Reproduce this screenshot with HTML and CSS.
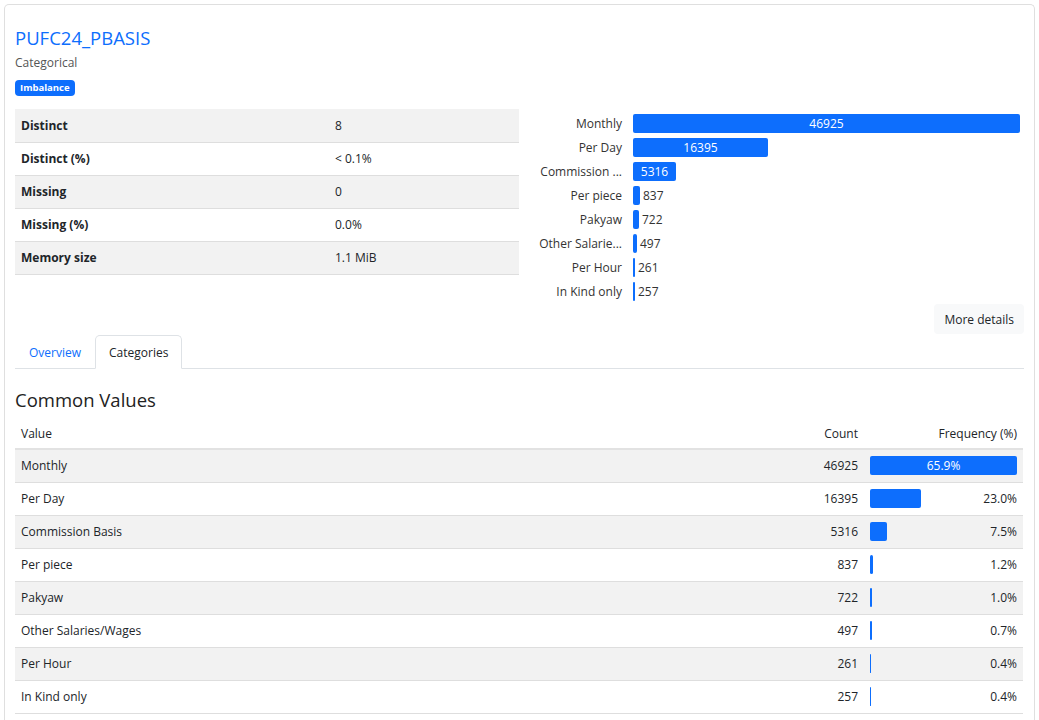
FILE: index.html
```html
<!DOCTYPE html>
<html>
<head>
<meta charset="utf-8">
<link rel="stylesheet" href="styles.css">
</head>
<body>
<div class="card">
  <h2 class="title">PUFC24_PBASIS</h2>
  <div class="subtitle">Categorical</div>
  <span class="badge">Imbalance</span>
  <div class="top">
    <table class="stats">
      <tr><th>Distinct</th><td>8</td></tr>
      <tr><th>Distinct (%)</th><td>&lt; 0.1%</td></tr>
      <tr><th>Missing</th><td>0</td></tr>
      <tr><th>Missing (%)</th><td>0.0%</td></tr>
      <tr><th>Memory size</th><td>1.1 MiB</td></tr>
    </table>
    <div class="chart">
      <div class="crow"><span class="clabel">Monthly</span><div class="ctrack"><div class="cbar in" style="width:387px">46925</div></div></div>
      <div class="crow"><span class="clabel">Per Day</span><div class="ctrack"><div class="cbar in" style="width:135px">16395</div></div></div>
      <div class="crow"><span class="clabel">Commission ...</span><div class="ctrack"><div class="cbar in" style="width:43px">5316</div></div></div>
      <div class="crow"><span class="clabel">Per piece</span><div class="ctrack"><div class="cbar" style="width:7px"></div><span class="cval">837</span></div></div>
      <div class="crow"><span class="clabel">Pakyaw</span><div class="ctrack"><div class="cbar" style="width:6px"></div><span class="cval">722</span></div></div>
      <div class="crow"><span class="clabel">Other Salarie...</span><div class="ctrack"><div class="cbar" style="width:4px"></div><span class="cval">497</span></div></div>
      <div class="crow"><span class="clabel">Per Hour</span><div class="ctrack"><div class="cbar thin" style="width:2px"></div><span class="cval">261</span></div></div>
      <div class="crow"><span class="clabel">In Kind only</span><div class="ctrack"><div class="cbar thin" style="width:2px"></div><span class="cval">257</span></div></div>
    </div>
  </div>
  <div class="actions"><button class="btn">More details</button></div>
  <div class="tabs">
    <span class="tab">Overview</span>
    <span class="tab active">Categories</span>
  </div>
  <h3 class="section">Common Values</h3>
  <table class="freq">
    <thead>
      <tr><th class="v">Value</th><th class="c">Count</th><th class="f">Frequency (%)</th></tr>
    </thead>
    <tbody>
      <tr><td class="v">Monthly</td><td class="c">46925</td><td class="f"><div class="fcell"><div class="fbar in" style="width:147px">65.9%</div></div></td></tr>
      <tr><td class="v">Per Day</td><td class="c">16395</td><td class="f"><div class="fcell"><div class="fbar" style="width:51px"></div><span class="fval">23.0%</span></div></td></tr>
      <tr><td class="v">Commission Basis</td><td class="c">5316</td><td class="f"><div class="fcell"><div class="fbar" style="width:17px"></div><span class="fval">7.5%</span></div></td></tr>
      <tr><td class="v">Per piece</td><td class="c">837</td><td class="f"><div class="fcell"><div class="fbar" style="width:3px"></div><span class="fval">1.2%</span></div></td></tr>
      <tr><td class="v">Pakyaw</td><td class="c">722</td><td class="f"><div class="fcell"><div class="fbar" style="width:2px"></div><span class="fval">1.0%</span></div></td></tr>
      <tr><td class="v">Other Salaries/Wages</td><td class="c">497</td><td class="f"><div class="fcell"><div class="fbar" style="width:2px"></div><span class="fval">0.7%</span></div></td></tr>
      <tr><td class="v">Per Hour</td><td class="c">261</td><td class="f"><div class="fcell"><div class="fbar" style="width:1px"></div><span class="fval">0.4%</span></div></td></tr>
      <tr><td class="v">In Kind only</td><td class="c">257</td><td class="f"><div class="fcell"><div class="fbar" style="width:1px"></div><span class="fval">0.4%</span></div></td></tr>
    </tbody>
  </table>
</div>
</body>
</html>
```
FILE: styles.css
```css
* { box-sizing: border-box; }
html, body { margin: 0; padding: 0; background: #fff; }
body {
  font-family: "Open Sans", "Noto Sans", sans-serif;
  font-size: 12px;
  color: #212529;
  padding: 4px 4px 0 4px;
}
.card {
  border: 1px solid #dfdfdf;
  border-bottom: none;
  border-radius: 5px 5px 0 0;
  padding: 20px 10px 0 10px;
  min-height: 716px;
}
.title {
  margin: 0;
  font-size: 18.5px;
  font-weight: 400;
  color: #0d6efd;
  line-height: 26px;
}
.subtitle {
  color: #555;
  font-size: 12px;
  line-height: 18px;
  margin-top: 3px;
}
.badge {
  display: inline-block;
  background: #0d6efd;
  color: #fff;
  font-weight: 700;
  font-size: 9.5px;
  line-height: 16px;
  padding: 0 5px;
  border-radius: 4px;
  margin-top: 8px;
}
.top {
  display: grid;
  grid-template-columns: 504px 504px;
  margin-top: 13px;
}
.stats {
  border-collapse: collapse;
  width: 504px;
  align-self: start;
}
.stats th, .stats td {
  height: 33px;
  padding: 0 6px;
  text-align: left;
  border-bottom: 1px solid #dedede;
  vertical-align: middle;
}
.stats th { font-weight: 700; width: 314px; }
.stats tr:nth-child(odd) { background: #f2f2f2; }
.chart {
  padding-top: 2px;
  display: flex;
  flex-direction: column;
}
.crow {
  display: flex;
  align-items: center;
  height: 24px;
}
.clabel {
  width: 103px;
  text-align: right;
  color: #333;
  white-space: nowrap;
}
.ctrack {
  margin-left: 11px;
  display: flex;
  align-items: center;
  flex: 1;
}
.cbar {
  height: 19px;
  background: #0d6efd;
  border-radius: 2px;
  color: #fff;
  text-align: center;
  line-height: 19px;
  flex: none;
}
.cbar.thin { border-radius: 1px; }
.cval { margin-left: 3px; color: #333; }
.actions {
  display: flex;
  justify-content: flex-end;
  margin-top: 1px;
}
.btn {
  font: inherit;
  font-size: 12px;
  color: #212529;
  background: #f8f9fa;
  border: none;
  border-radius: 4px;
  height: 30px;
  padding: 0 10px;
}
.tabs {
  display: flex;
  border-bottom: 1px solid #dee2e6;
  margin-top: 1px;
  height: 34px;
}
.tab {
  display: flex;
  align-items: center;
  padding: 0 13px;
  color: #0d6efd;
  border: 1px solid transparent;
  border-radius: 5px 5px 0 0;
  margin-bottom: -1px;
}
.tab.active {
  color: #212529;
  background: #fff;
  border-color: #dee2e6 #dee2e6 #fff;
}
.section {
  margin: 18px 0 0 0;
  font-size: 18.5px;
  font-weight: 400;
  line-height: 26px;
  color: #222;
}
.freq {
  width: 1008px;
  border-collapse: collapse;
  margin-top: 6px;
}
.freq th {
  font-weight: 400;
  height: 30px;
  padding: 0 6px;
  border-bottom: 2px solid #e2e2e2;
  vertical-align: middle;
}
.freq td {
  height: 33px;
  padding: 0 6px;
  border-bottom: 1px solid #dedede;
  vertical-align: middle;
}
.freq tbody tr:nth-child(odd) { background: #f2f2f2; }
.freq .v { text-align: left; }
.freq .c { text-align: right; width: 158px; }
.freq .f { text-align: right; width: 159px; }
.fcell { display: flex; align-items: center; }
.fbar {
  height: 19px;
  background: #0d6efd;
  border-radius: 2px;
  color: #fff;
  text-align: center;
  line-height: 19px;
  flex: none;
}
.fval { flex: 1; text-align: right; }
```
